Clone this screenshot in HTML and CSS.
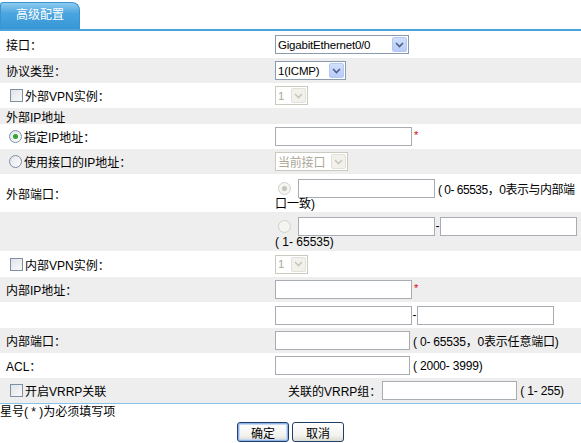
FILE: index.html
```html
<!DOCTYPE html>
<html>
<head>
<meta charset="utf-8">
<link rel="stylesheet" href="styles.css">
</head>
<body>
<div class="tabbar"><div class="tab">高级配置</div></div>
<div class="form">
  <div class="row first">
    <div class="lab">接口：</div>
    <div class="val"><span class="sel w134"><span class="txt">GigabitEthernet0/0</span><span class="arr"><svg width="9" height="6" viewBox="0 0 9 6"><path d="M1 1 L4.5 4.5 L8 1" fill="none" stroke="#4d6185" stroke-width="1.6"/></svg></span></span></div>
  </div>
  <div class="row g">
    <div class="lab">协议类型：</div>
    <div class="val"><span class="sel w71"><span class="txt">1(ICMP)</span><span class="arr"><svg width="9" height="6" viewBox="0 0 9 6"><path d="M1 1 L4.5 4.5 L8 1" fill="none" stroke="#4d6185" stroke-width="1.6"/></svg></span></span></div>
  </div>
  <div class="row">
    <div class="lab"><span class="cb"></span>外部VPN实例：</div>
    <div class="val"><span class="sel dis w33"><span class="txt">1</span><span class="arr"><svg width="9" height="6" viewBox="0 0 9 6"><path d="M1 1 L4.5 4.5 L8 1" fill="none" stroke="#c9c7ba" stroke-width="1.6"/></svg></span></span></div>
  </div>
  <div class="row g short">
    <div class="lab">外部IP地址</div>
  </div>
  <div class="row">
    <div class="lab"><span class="rb on"></span>指定IP地址：</div>
    <div class="val"><span class="inp"></span><span class="req">*</span></div>
  </div>
  <div class="row g">
    <div class="lab"><span class="rb"></span>使用接口的IP地址：</div>
    <div class="val"><span class="sel dis w73"><span class="txt">当前接口</span><span class="arr"><svg width="9" height="6" viewBox="0 0 9 6"><path d="M1 1 L4.5 4.5 L8 1" fill="none" stroke="#c9c7ba" stroke-width="1.6"/></svg></span></span></div>
  </div>
  <div class="row port">
    <div class="lab">外部端口：</div>
    <div class="val block">
      <div class="line"><span class="rb sm dis on"></span><span class="inp"></span><span class="hint tight">( 0- 65535，0表示与内部端</span></div>
      <div class="line2">口一致)</div>
    </div>
  </div>
  <div class="row g port b">
    <div class="lab"></div>
    <div class="val block">
      <div class="line"><span class="rb sm dis"></span><span class="inp"></span><span class="dash">-</span><span class="inp"></span></div>
      <div class="line2">( 1- 65535)</div>
    </div>
  </div>
  <div class="row tall">
    <div class="lab"><span class="cb"></span>内部VPN实例：</div>
    <div class="val"><span class="sel dis w33"><span class="txt">1</span><span class="arr"><svg width="9" height="6" viewBox="0 0 9 6"><path d="M1 1 L4.5 4.5 L8 1" fill="none" stroke="#c9c7ba" stroke-width="1.6"/></svg></span></span></div>
  </div>
  <div class="row g">
    <div class="lab">内部IP地址：</div>
    <div class="val"><span class="inp"></span><span class="req">*</span></div>
  </div>
  <div class="row tall">
    <div class="lab"></div>
    <div class="val"><span class="inp"></span><span class="dash">-</span><span class="inp"></span></div>
  </div>
  <div class="row g">
    <div class="lab">内部端口：</div>
    <div class="val"><span class="inp w135"></span><span class="hint">( 0- 65535，0表示任意端口)</span></div>
  </div>
  <div class="row">
    <div class="lab">ACL：</div>
    <div class="val"><span class="inp w135"></span><span class="hint">( 2000- 3999)</span></div>
  </div>
  <div class="row g last">
    <div class="lab"><span class="cb"></span>开启VRRP关联</div>
    <div class="val vrrp"><span class="vlab">关联的VRRP组：</span><span class="inp w135"></span><span class="hint">( 1- 255)</span></div>
  </div>
</div>
<div class="note">星号( * )为必须填写项</div>
<div class="buttons">
  <button class="btn def" type="button">确定</button>
  <button class="btn" type="button">取消</button>
</div>
</body>
</html>
```
FILE: styles.css
```css
body {
  margin: 0;
  width: 581px;
  background: #fff;
  color: #000;
  font-family: "Liberation Sans", "Noto Sans CJK SC", sans-serif;
  font-size: 12px;
}

.tabbar {
  height: 29px;
  border-bottom: 2px solid #4ba3da;
  display: flex;
  align-items: flex-end;
}

.tab {
  width: 80px;
  height: 27px;
  box-sizing: border-box;
  background: linear-gradient(#8fcbef, #4aa5df 40%, #3796d5);
  border: 1px solid #3a94d0;
  border-bottom: none;
  border-radius: 3px 8px 0 0;
  color: #fff;
  text-align: center;
  line-height: 25px;
}

.row {
  display: flex;
  align-items: center;
  height: 25px;
}
.row.first { height: 27px; }
.row.tall { height: 26px; }
.row.short { height: 16px; }
.row.port { height: 38px; }
.row.port.b { height: 39px; }
.row.g { background: #eeeeee; }
.row.last { border-bottom: 1px solid #86c3e6; }

.lab {
  width: 275px;
  flex: none;
  box-sizing: border-box;
  padding-left: 6px;
  display: flex;
  align-items: center;
  white-space: nowrap;
}

.val {
  flex: 1;
  display: flex;
  align-items: center;
  white-space: nowrap;
}
.val.block { display: block; align-self: stretch; padding-top: 4px; }
.line { display: flex; align-items: center; height: 20px; }
.line2 { height: 13px; line-height: 13px; }

.cb {
  width: 13px;
  height: 13px;
  box-sizing: border-box;
  border: 1px solid #7d90a6;
  background: linear-gradient(135deg, #dfe3e8, #fafafa);
  margin: 0 2px 0 4px;
  flex: none;
}

.rb {
  width: 13px;
  height: 13px;
  box-sizing: border-box;
  border: 1px solid #7d90a6;
  border-radius: 50%;
  background: linear-gradient(135deg, #e2e5ea, #fdfdfd);
  margin: 0 2px 0 3px;
  flex: none;
  display: flex;
  align-items: center;
  justify-content: center;
}
.rb.on::after {
  content: "";
  width: 5px;
  height: 5px;
  border-radius: 50%;
  background: #2fa52f;
}
.rb.sm { margin: 0 7px 0 3px; }
.rb.dis { border-color: #d2d2cc; background: #f4f4f0; }
.rb.dis.on::after { background: #c4c4bc; }

.sel {
  height: 19px;
  box-sizing: border-box;
  border: 1px solid #8a9bb0;
  background: #fff;
  display: inline-flex;
  align-items: center;
  justify-content: space-between;
  font-size: 11.5px;
}
.sel .txt { padding-left: 2px; letter-spacing: -0.2px; }
.sel .arr {
  width: 15px;
  height: 15px;
  margin: 1px;
  box-sizing: border-box;
  background: linear-gradient(#d2dffc, #b8cbf8);
  border: 1px solid #b5c8f3;
  border-radius: 2px;
  display: flex;
  align-items: center;
  justify-content: center;
}
.sel.dis { border-color: #cbcac0; color: #aca899; }
.sel.dis .arr { background: #f2f1ec; border-color: #e2e1d9; }
.w134 { width: 134px; }
.w71 { width: 71px; }
.w33 { width: 33px; }
.w73 { width: 73px; font-size: 12px; }

.inp {
  width: 137px;
  height: 19px;
  box-sizing: border-box;
  border: 1px solid #a8adb3;
  background: #fff;
  flex: none;
}
.inp.w135 { width: 135px; }

.req {
  color: #e00000;
  align-self: flex-start;
  margin: 3px 0 0 2px;
  font-size: 11px;
  line-height: 11px;
}

.dash { width: 5px; text-align: center; }
.hint { margin-left: 3px; letter-spacing: -0.2px; }
.hint.tight { letter-spacing: -0.5px; }

.vrrp { padding-left: 13px; }
.vlab { margin-right: 1px; }

.note {
  height: 15px;
  line-height: 15px;
  padding-top: 1px;
}

.buttons {
  display: flex;
  justify-content: center;
  gap: 3px;
  padding-top: 2px;
}

.btn {
  width: 52px;
  height: 20px;
  padding: 0;
  box-sizing: border-box;
  border: 1px solid #1e3f6a;
  border-radius: 3px;
  background: linear-gradient(#ffffff, #f2f2ee 70%, #dcdcd4);
  font-family: "Liberation Sans", "Noto Sans CJK SC", sans-serif;
  font-size: 12px;
  color: #000;
}
.btn.def { box-shadow: inset 0 0 0 1px #8fb2e8, inset 0 0 0 2px #c6d8f6; }
```
